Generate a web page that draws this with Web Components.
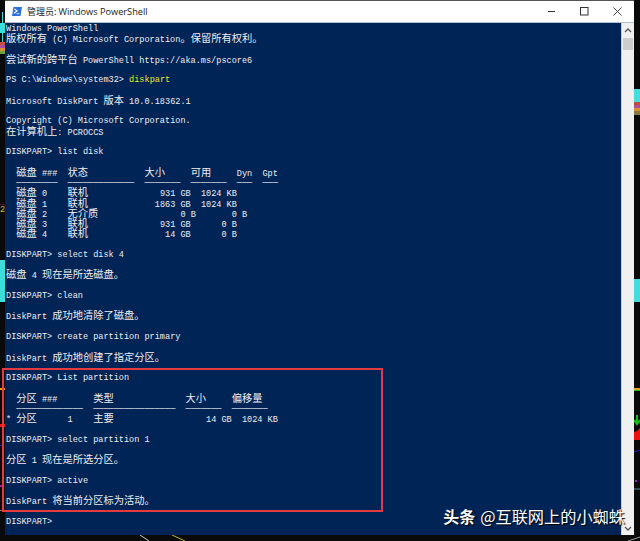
<!DOCTYPE html>
<html lang="zh-CN">
<head>
<meta charset="utf-8">
<title>Windows PowerShell</title>
<style>
  html, body { margin: 0; padding: 0; background: #0a0a0a; }
  body { width: 640px; height: 541px; overflow: hidden; }
</style>
</head>
<body>
<ps-desktop>
  <ps-window>
    <ps-line>Windows PowerShell</ps-line>
    <ps-line>版权所有 (C) Microsoft Corporation。保留所有权利。</ps-line>
    <ps-line></ps-line>
    <ps-line>尝试新的跨平台 PowerShell https://aka.ms/pscore6</ps-line>
    <ps-line></ps-line>
    <ps-line cmd="diskpart">PS C:\Windows\system32> </ps-line>
    <ps-line></ps-line>
    <ps-line>Microsoft DiskPart 版本 10.0.18362.1</ps-line>
    <ps-line></ps-line>
    <ps-line>Copyright (C) Microsoft Corporation.</ps-line>
    <ps-line>在计算机上: PCROCCS</ps-line>
    <ps-line></ps-line>
    <ps-line>DISKPART> list disk</ps-line>
    <ps-line></ps-line>
    <ps-line>  磁盘 ###  状态           大小     可用     Dyn  Gpt</ps-line>
    <ps-line>  ────────  ─────────────  ───────  ───────  ───  ───</ps-line>
    <ps-line>  磁盘 0    联机              931 GB  1024 KB</ps-line>
    <ps-line>  磁盘 1    联机             1863 GB  1024 KB</ps-line>
    <ps-line>  磁盘 2    无介质                0 B       0 B</ps-line>
    <ps-line>  磁盘 3    联机              931 GB      0 B</ps-line>
    <ps-line>  磁盘 4    联机               14 GB      0 B</ps-line>
    <ps-line></ps-line>
    <ps-line>DISKPART> select disk 4</ps-line>
    <ps-line></ps-line>
    <ps-line>磁盘 4 现在是所选磁盘。</ps-line>
    <ps-line></ps-line>
    <ps-line>DISKPART> clean</ps-line>
    <ps-line></ps-line>
    <ps-line>DiskPart 成功地清除了磁盘。</ps-line>
    <ps-line></ps-line>
    <ps-line>DISKPART> create partition primary</ps-line>
    <ps-line></ps-line>
    <ps-line>DiskPart 成功地创建了指定分区。</ps-line>
    <ps-line></ps-line>
    <ps-line>DISKPART> List partition</ps-line>
    <ps-line></ps-line>
    <ps-line>  分区 ###       类型              大小     偏移量</ps-line>
    <ps-line>  ─────────────  ────────────────  ───────  ───────</ps-line>
    <ps-line>* 分区      1    主要                  14 GB  1024 KB</ps-line>
    <ps-line></ps-line>
    <ps-line>DISKPART> select partition 1</ps-line>
    <ps-line></ps-line>
    <ps-line>分区 1 现在是所选分区。</ps-line>
    <ps-line></ps-line>
    <ps-line>DISKPART> active</ps-line>
    <ps-line></ps-line>
    <ps-line>DiskPart 将当前分区标为活动。</ps-line>
    <ps-line></ps-line>
    <ps-line>DISKPART> </ps-line>
  </ps-window>
</ps-desktop>

<script>
const lineStyle = `<style>
  :host { display: block; height: 10.27px; line-height: 10.27px; white-space: pre; }
  .cjk { font: 10.26px/8px "Noto Sans CJK SC", sans-serif; }
  .cmd { color: #e8e81e; }
</style>`;

class PsLine extends HTMLElement {
  connectedCallback() {
    const shadow = this.attachShadow({ mode: "open" });
    const cjk = /([\u3000-\u303f\u4e00-\u9fff]+)/;
    const html = this.textContent.split(cjk).map((part, i) => {
      const safe = part.replace(/&/g, "&amp;").replace(/</g, "&lt;");
      return i % 2 ? `<span class="cjk">${safe}</span>` : safe;
    }).join("");
    const cmd = this.getAttribute("cmd");
    shadow.innerHTML = lineStyle + html + (cmd ? `<span class="cmd">${cmd}</span>` : "");
  }
}
customElements.define("ps-line", PsLine);

class PsTitlebar extends HTMLElement {
  constructor() {
    super();
    this.attachShadow({ mode: "open" }).innerHTML = `
      <style>
        :host {
          display: flex;
          align-items: center;
          height: 21px;
          padding-left: 7px;
          background: #fff;
          border-bottom: 1px solid #b4bfd2;
          color: #222;
          font: 9px/21px "Noto Sans CJK SC", "Liberation Sans", sans-serif;
        }
        .title { margin-left: 5px; flex: 1; white-space: pre; }
        .latin { font-family: "Open Sans", "Liberation Sans", sans-serif; font-size: 9.2px; }
        svg { display: block; flex: none; }
        .btn { width: 33px; display: flex; justify-content: center; }
      </style>
      <svg width="10" height="9" viewBox="0 0 11 10">
        <path d="M1.6 0H11L9.4 10H0z" fill="#2b6fd8"/>
        <path d="M2.6 2l3 2.4-3.6 2.6" fill="none" stroke="#fff" stroke-width="1.2"/>
        <path d="M5 7.4h3" stroke="#dfe9fa" stroke-width="1"/>
      </svg>
      <span class="title">管理员: <span class="latin">Windows PowerShell</span></span>
      <span class="btn"><svg width="9" height="9" viewBox="0 0 9 9"><path d="M1 4.5h7" stroke="#333" stroke-width="1"/></svg></span>
      <span class="btn"><svg width="9" height="9" viewBox="0 0 9 9"><rect x=".5" y=".5" width="7.5" height="7.5" fill="none" stroke="#333"/></svg></span>
      <span class="btn"><svg width="9" height="9" viewBox="0 0 9 9"><path d="M.5.5l8 8M8.5.5l-8 8" stroke="#333" stroke-width=".9"/></svg></span>`;
  }
}
customElements.define("ps-titlebar", PsTitlebar);

class PsScrollbar extends HTMLElement {
  constructor() {
    super();
    this.attachShadow({ mode: "open" }).innerHTML = `
      <style>
        :host {
          display: flex;
          flex-direction: column;
          align-items: center;
          width: 12px;
          background: #f0f0f0;
          border-left: 1px solid #c3cbda;
          box-sizing: content-box;
        }
        svg { display: block; flex: none; }
        .thumb { width: 10px; height: 12px; margin-top: 3px; background: #cdcdcd; }
        .gap { flex: 1; }
      </style>
      <svg width="8" height="9" viewBox="0 0 8 9" style="margin-top:3px"><path d="M1 6l3-3 3 3" fill="none" stroke="#555" stroke-width="1.3"/></svg>
      <div class="thumb"></div>
      <div class="gap"></div>
      <svg width="8" height="9" viewBox="0 0 8 9" style="margin-bottom:2px"><path d="M1 3l3 3 3-3" fill="none" stroke="#555" stroke-width="1.3"/></svg>`;
  }
}
customElements.define("ps-scrollbar", PsScrollbar);

class PsWindow extends HTMLElement {
  constructor() {
    super();
    this.attachShadow({ mode: "open" }).innerHTML = `
      <style>
        :host {
          display: flex;
          flex-direction: column;
          position: relative;
          border-top: 1px solid #555;
          box-sizing: border-box;
          min-width: 0;
        }
        .body { flex: 1; display: flex; min-height: 0; }
        .term {
          flex: 1;
          padding: 1px 0 0 1px;
          background: #012456;
          color: #eeedf0;
          font: 8.55px "Liberation Mono", monospace;
          overflow: hidden;
        }
        /* red annotation box drawn over the console */
        .mark {
          position: absolute;
          left: -3px;
          top: 367px;
          width: 377px;
          height: 140px;
          border: 2px solid #e53a40;
        }
        .stamp {
          position: absolute;
          right: 9px;
          top: 505px;
          display: flex;
          gap: 5px;
          color: #fff;
          font: 16.2px/20px "Noto Sans CJK SC", sans-serif;
          white-space: nowrap;
          text-shadow: 1px 1px 1px #000;
        }
        .stamp b { font-weight: 700; font-size: 16px; }
      </style>
      <ps-titlebar></ps-titlebar>
      <div class="body">
        <div class="term"><slot></slot></div>
        <ps-scrollbar></ps-scrollbar>
      </div>
      <div class="mark"></div>
      <div class="stamp"><b>头条</b><span>@互联网上的小蜘蛛</span></div>`;
  }
}
customElements.define("ps-window", PsWindow);

// the stock chart that shows around the window
class PsDesktop extends HTMLElement {
  constructor() {
    super();
    this.attachShadow({ mode: "open" }).innerHTML = `
      <style>
        :host {
          display: grid;
          grid-template-columns: 5px 629px 6px;
          grid-template-rows: 535px 6px;
          width: 640px;
          height: 541px;
          background: #0a0a0a;
        }
        svg { display: block; }
        .foot { grid-column: 1 / 4; }
      </style>
      <svg width="5" height="535" viewBox="0 0 5 535">
        <path d="M2.5 12v30" stroke="#3fd8d8"/>
        <rect y="23" width="5" height="10" fill="#3fdcdc"/>
        <rect y="42" width="5" height="3" fill="#c8503c"/>
        <rect y="45" width="5" height="3" fill="#b04ca0"/>
        <rect y="48" width="5" height="3" fill="#d89030"/>
        <rect y="51" width="5" height="3" fill="#70a040"/>
        <path d="M0 204.5h5" stroke="#5a1414"/>
        <text x="0" y="212" font-family="Liberation Mono" font-size="8.5" fill="#d8c020">2</text>
        <rect y="260" width="5" height="42" fill="#3fdcdc"/>
        <rect y="388" width="5" height="2" fill="#f0a020"/>
        <rect y="424" width="5" height="3" fill="#e81c1c"/>
        <rect y="445" width="2" height="1" fill="#2020c0"/>
        <rect y="485" width="2" height="2" fill="#a020a0"/>
        <path d="M0 510.5h5" stroke="#777"/>
      </svg>
      <slot></slot>
      <svg width="6" height="535" viewBox="0 0 6 535">
        <rect y="89" width="6" height="13" fill="#45dcdc"/>
        <rect y="102" width="6" height="3" fill="#c04c3c"/>
        <rect y="105" width="6" height="3" fill="#b04ca0"/>
        <rect y="108" width="6" height="3" fill="#d89030"/>
        <rect y="111" width="6" height="4" fill="#8a7a40"/>
        <rect y="279" width="6" height="23" fill="#45dcdc"/>
        <rect y="388" width="6" height="2" fill="#e8a020"/>
        <rect y="390" width="6" height="1" fill="#20c020"/>
        <path d="M3 415v8M0 420l3 4 3-4" fill="none" stroke="#10c010" stroke-width="2"/>
        <path d="M0 440v-8l3-1 3-3v12z" fill="#ee1010"/>
        <path d="M0 452l6-2" stroke="#2020d0"/>
        <rect x="1" y="480" width="2" height="2" fill="#a020c0"/>
        <path d="M0 489h6" stroke="#4f8f98"/>
      </svg>
      <svg class="foot" width="640" height="6" viewBox="0 0 640 6">
        <path d="M140 0l9 6" stroke="#ccc" stroke-width="1"/>
        <path d="M172 0l13 6" stroke="#c8b020" stroke-width="1"/>
        <path d="M628 6l12-4" stroke="#999" stroke-width="1"/>
      </svg>`;
  }
}
customElements.define("ps-desktop", PsDesktop);
</script>
</body>
</html>
